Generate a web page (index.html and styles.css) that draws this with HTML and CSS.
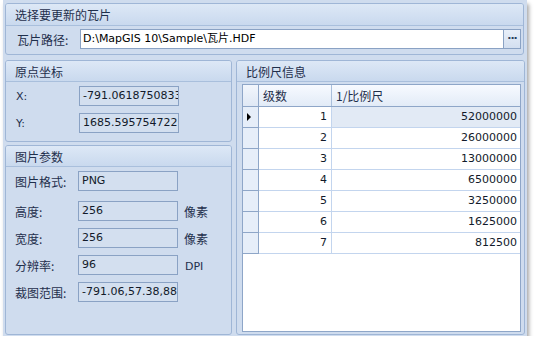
FILE: index.html
```html
<!DOCTYPE html>
<html>
<head>
<meta charset="utf-8">
<link rel="stylesheet" href="styles.css">
</head>
<body>
<div class="window">
  <section class="group top">
    <div class="ghead">选择要更新的瓦片</div>
    <div class="path-row">
      <span class="lbl">瓦片路径:</span>
      <div class="path-box">
        <span class="path-text">D:\MapGIS 10\Sample\瓦片.HDF</span>
        <span class="btn">···</span>
      </div>
    </div>
  </section>
  <div class="lower">
    <div class="leftcol">
      <section class="group origin">
        <div class="ghead">原点坐标</div>
        <div class="rows">
          <div class="row"><span class="lbl lat">X:</span><span class="tb">-791.06187508332</span></div>
          <div class="row"><span class="lbl lat">Y:</span><span class="tb">1685.595754722</span></div>
        </div>
      </section>
      <section class="group params">
        <div class="ghead">图片参数</div>
        <div class="rows prow">
          <div class="row"><span class="lbl">图片格式:</span><span class="tb">PNG</span></div>
          <div class="row r2"><span class="lbl">高度:</span><span class="tb">256</span><span class="unit">像素</span></div>
          <div class="row"><span class="lbl">宽度:</span><span class="tb">256</span><span class="unit">像素</span></div>
          <div class="row"><span class="lbl">分辨率:</span><span class="tb">96</span><span class="unit lat">DPI</span></div>
          <div class="row"><span class="lbl">裁图范围:</span><span class="tb">-791.06,57.38,888.49</span></div>
        </div>
      </section>
    </div>
    <section class="group scale">
      <div class="ghead">比例尺信息</div>
      <div class="grid">
        <div class="gr head"><span class="rh"></span><span class="c1">级数</span><span class="c2">1/比例尺</span></div>
        <div class="gr sel"><span class="rh"><i class="arrow"></i></span><span class="c1">1</span><span class="c2">52000000</span></div>
        <div class="gr"><span class="rh"></span><span class="c1">2</span><span class="c2">26000000</span></div>
        <div class="gr"><span class="rh"></span><span class="c1">3</span><span class="c2">13000000</span></div>
        <div class="gr"><span class="rh"></span><span class="c1">4</span><span class="c2">6500000</span></div>
        <div class="gr"><span class="rh"></span><span class="c1">5</span><span class="c2">3250000</span></div>
        <div class="gr"><span class="rh"></span><span class="c1">6</span><span class="c2">1625000</span></div>
        <div class="gr"><span class="rh"></span><span class="c1">7</span><span class="c2">812500</span></div>
      </div>
    </section>
  </div>
</div>
</body>
</html>
```
FILE: styles.css
```css
html, body { margin: 0; padding: 0; background: #ffffff; }
body {
  font-family: "DejaVu Sans", "Noto Sans CJK SC", sans-serif;
  font-size: 11px;
  color: #1f2f4c;
}
.window {
  margin-left: 3px;
  width: 524px;
  height: 336px;
  box-sizing: border-box;
  padding: 3px 2px 1px 2px;
  background: #cfdcee;
  box-shadow: 2px 4px 4px rgba(0,0,0,0.35);
  display: flex;
  flex-direction: column;
  gap: 5px;
}
.group {
  border: 1px solid #9fb6d6;
  border-radius: 3px;
  box-sizing: border-box;
  background: #cfdcee;
  display: flex;
  flex-direction: column;
}
.ghead {
  height: 21px;
  flex: none;
  box-sizing: border-box;
  border-bottom: 1px solid #a9bfdc;
  background: linear-gradient(#dde8f6, #c9d9ee);
  font-family: "Noto Sans CJK SC", sans-serif;
  font-size: 12px;
  line-height: 21px;
  padding-left: 9px;
  color: #1f2f4c;
  border-radius: 2px 2px 0 0;
}
.top { height: 52px; margin-right: 1px; }
.top .ghead { height: 22px; line-height: 22px; }
.path-row {
  display: flex;
  align-items: center;
  padding: 3px 2px 0 11px;
}
.lbl {
  font-family: "Noto Sans CJK SC", sans-serif;
  font-size: 12px;
  width: 63px;
  flex: none;
}
.lbl.lat { font-family: "DejaVu Sans", sans-serif; font-size: 11px; padding-left: 1px; width: 63px; }
.path-box {
  flex: 1;
  display: flex;
  height: 20px;
  border: 1px solid #8aa2c4;
  box-sizing: border-box;
  background: #ffffff;
}
.path-text {
  flex: 1;
  line-height: 18px;
  padding-left: 2px;
  color: #000000;
  font-size: 11px;
}
.btn {
  width: 16px;
  border-left: 1px solid #8aa2c4;
  background: linear-gradient(#e8eff9, #d3dff0);
  text-align: center;
  font-weight: bold;
  line-height: 17px;
  color: #2b3e5e;
  font-size: 11px;
  letter-spacing: -1px;
}
.lower {
  flex: 1;
  display: flex;
  gap: 4px;
}
.leftcol {
  width: 227px;
  display: flex;
  flex-direction: column;
  gap: 3px;
}
.origin { height: 82px; }
.params { flex: 1; }
.rows {
  display: flex;
  flex-direction: column;
  gap: 7px;
  padding: 4px 0 0 9px;
}
.prow { padding-top: 4px; }
.prow .r2 { margin-top: 3px; }
.row {
  display: flex;
  align-items: center;
  height: 20px;
}
.tb {
  width: 100px;
  height: 20px;
  box-sizing: border-box;
  border: 1px solid #8aa2c4;
  background: #d3dfef;
  line-height: 18px;
  padding-left: 3px;
  color: #121a2a;
  overflow: hidden;
  white-space: nowrap;
  flex: none;
}
.unit {
  font-family: "Noto Sans CJK SC", sans-serif;
  font-size: 12px;
  margin-left: 6px;
}
.unit.lat { font-family: "DejaVu Sans", sans-serif; font-size: 11px; margin-left: 7px; margin-top: 2px; }
.scale { flex: 1; }
.grid {
  margin: 2px 3px 2px 5px;
  flex: 1;
  background: #ffffff;
  border: 1px solid #8ea6c8;
  display: flex;
  flex-direction: column;
}
.gr {
  display: flex;
  height: 21px;
  border-bottom: 1px solid #c3d5ee;
  box-sizing: border-box;
  color: #121a2a;
  line-height: 20px;
}
.gr .rh {
  width: 15px;
  flex: none;
  background: #e6eef9;
  border-right: 1px solid #8ea6c8;
  border-bottom: 1px solid #8ea6c8;
  margin-bottom: -1px;
  position: relative;
}
.gr .c1 {
  width: 73px;
  border-right: 1px solid #c3d5ee;
  text-align: right;
  padding-right: 4px;
  box-sizing: border-box;
}
.gr .c2 {
  flex: 1;
  text-align: right;
  padding-right: 3px;
}
.gr.head {
  height: 22px;
  line-height: 21px;
  background: linear-gradient(#f7faff, #e2ebf7);
  border-bottom: 1px solid #8ea6c8;
  font-family: "Noto Sans CJK SC", sans-serif;
  font-size: 12px;
  color: #1f2f4c;
}
.gr.head .rh { background: linear-gradient(#f2f6fc, #dfe8f5); border-bottom: none; margin-bottom: 0; }
.gr.head .c1 { text-align: left; padding-left: 4px; border-right: 1px solid #a9bfdc; }
.gr.head .c2 { text-align: left; padding-left: 4px; }
.gr.sel .c2 { background: #e2eaf5; }
.arrow {
  position: absolute;
  left: 4px;
  top: 6px;
  width: 0;
  height: 0;
  border-top: 4px solid transparent;
  border-bottom: 4px solid transparent;
  border-left: 4px solid #000000;
}
```
